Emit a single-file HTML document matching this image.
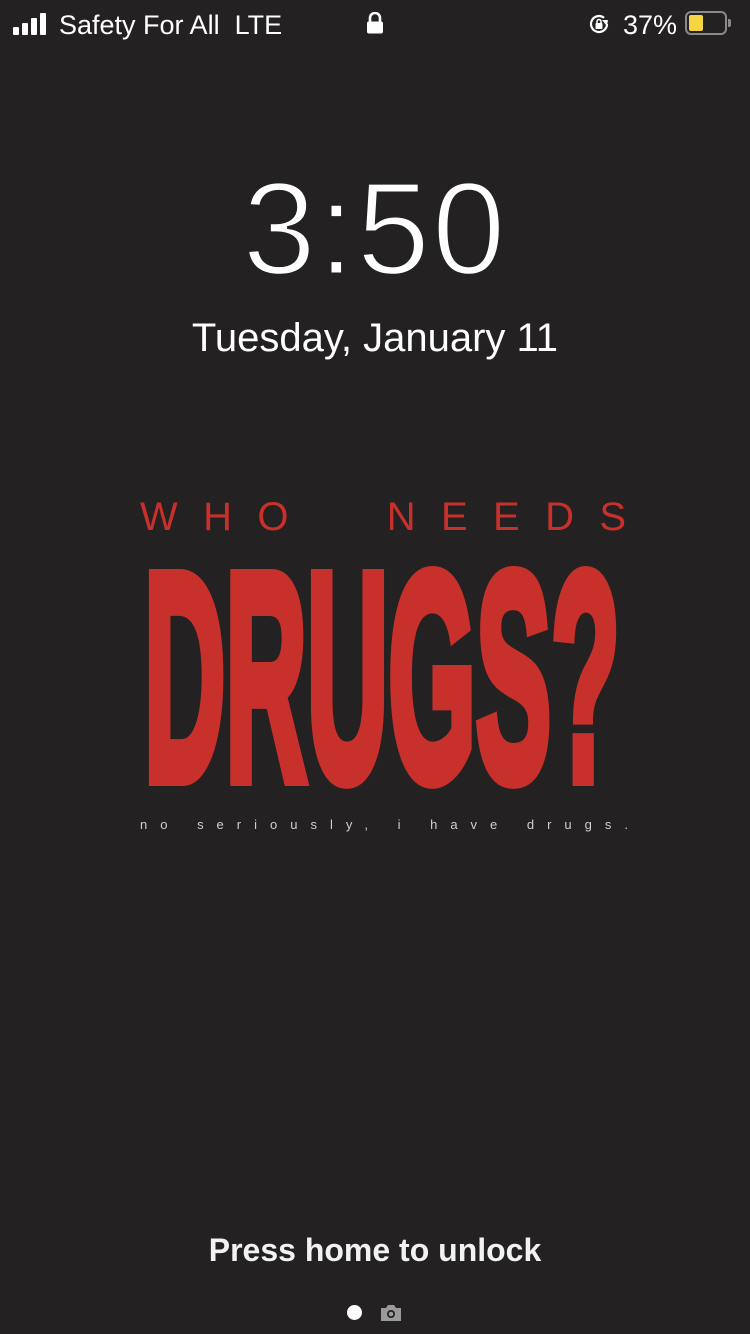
<!DOCTYPE html>
<html><head><meta charset="utf-8"><style>
html,body{margin:0;padding:0}
body{width:750px;height:1334px;background:#232122;position:relative;overflow:hidden;font-family:"Liberation Sans",sans-serif;color:#fff}
.a{position:absolute}
</style></head><body>
<div class="a" style="left:13px;top:13px;width:40px;height:22px">
<div class="a" style="left:0;top:14px;width:6px;height:8px;background:#fff;border-radius:1px"></div>
<div class="a" style="left:9px;top:10px;width:6px;height:12px;background:#fff;border-radius:1px"></div>
<div class="a" style="left:18px;top:5px;width:6px;height:17px;background:#fff;border-radius:1px"></div>
<div class="a" style="left:27px;top:0;width:6px;height:22px;background:#fff;border-radius:1px"></div>
</div>
<div class="a" style="left:59px;top:8px;font-size:27px;line-height:34px">Safety For All&nbsp; LTE</div>
<svg class="a" style="left:366px;top:12px" width="18" height="22" viewBox="0 0 18 22"><path d="M4 10V6a5 5 0 0 1 10 0v4" fill="none" stroke="#fff" stroke-width="2.6"/><rect x="1" y="9.5" width="16" height="12" rx="2" fill="#fff"/></svg>
<svg class="a" style="left:587px;top:12px" width="24" height="24" viewBox="0 0 24 24"><path d="M20 12a8 8 0 1 1-3-6.2" fill="none" stroke="#fff" stroke-width="2.2"/><path d="M15 8l6 0-1 6z" fill="#fff"/><rect x="8.5" y="11" width="7" height="6" rx="1" fill="#fff"/><path d="M10 11V9.5a2 2 0 0 1 4 0V11" fill="none" stroke="#fff" stroke-width="1.5"/></svg>
<div class="a" style="left:623px;top:8px;font-size:27px;line-height:34px">37%</div>
<div class="a" style="left:685px;top:11px;width:42px;height:24px;border:2px solid #8a8a8a;border-radius:6px;box-sizing:border-box"></div>
<div class="a" style="left:689px;top:15px;width:14px;height:16px;background:#f6d545;border-radius:2px"></div>
<div class="a" style="left:728px;top:19px;width:3px;height:8px;background:#8a8a8a;border-radius:0 2px 2px 0"></div>
<div class="a" style="left:0;width:750px;top:163px;text-align:center;font-size:132px;line-height:132px;-webkit-text-stroke:3px #232122;letter-spacing:2px">3:50</div>
<div class="a" style="left:0;width:750px;top:315px;text-align:center;font-size:40px;line-height:46px">Tuesday, January 11</div>
<svg class="a" style="left:0;top:480px" width="750" height="360" viewBox="0 0 750 360">
<text x="140" y="50" font-family="Liberation Sans" font-size="40" fill="#c8302b" textLength="486" lengthAdjust="spacing">WHO&#160;&#160;NEEDS</text>
<text x="144" y="299" font-family="Liberation Sans" font-weight="bold" font-size="295" fill="#c8302b" stroke="#c8302b" stroke-width="14" stroke-linejoin="miter" textLength="476" lengthAdjust="spacingAndGlyphs">DRUGS?</text>
<text x="140" y="349" font-family="Liberation Sans" font-size="13" fill="#cfcfcf" textLength="488" lengthAdjust="spacing">no  seriously,  i  have  drugs.</text>
</svg>
<div class="a" style="left:0;width:750px;top:1230px;text-align:center;font-size:32px;line-height:40px;font-weight:bold;color:#f2f2f2">Press home to unlock</div>
<div class="a" style="left:347px;top:1305px;width:15px;height:15px;border-radius:50%;background:#fff"></div>
<svg class="a" style="left:379px;top:1303px" width="24" height="19" viewBox="0 0 24 19"><path d="M2 5h5l2-3h6l2 3h5v13H2z" fill="#9a9a9a"/><circle cx="12" cy="11" r="4" fill="#232122"/><circle cx="12" cy="11" r="2.3" fill="#9a9a9a"/></svg>
</body></html>
